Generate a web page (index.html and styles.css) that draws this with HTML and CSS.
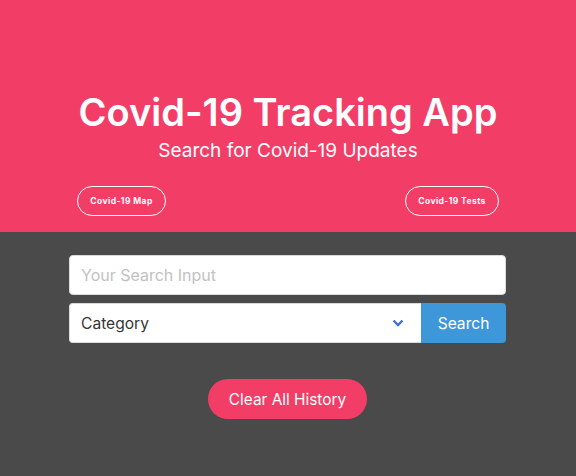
FILE: index.html
```html
<!DOCTYPE html>
<html>
<head>
<meta charset="utf-8">
<link rel="stylesheet" href="styles.css">
</head>
<body>
<section class="hero">
  <h1 class="title">Covid-19 Tracking App</h1>
  <h2 class="subtitle">Search for Covid-19 Updates</h2>
  <div class="links">
    <a class="pill">Covid-19 Map</a>
    <a class="pill">Covid-19 Tests</a>
  </div>
</section>
<main class="main">
  <div class="form">
    <input class="input" type="text" placeholder="Your Search Input">
    <div class="row">
      <div class="select">
        <span>Category</span>
        <svg class="chev" width="12" height="8" viewBox="0 0 12 8"><path d="M1.5 1.5 L6 6 L10.5 1.5" fill="none" stroke="#3e6fdc" stroke-width="2.4"/></svg>
      </div>
      <button class="search">Search</button>
    </div>
  </div>
  <button class="clear">Clear All History</button>
</main>
</body>
</html>
```
FILE: styles.css
```css
* { box-sizing: border-box; }
html, body { margin: 0; height: 100%; }
body {
  font-family: Inter, "Noto Sans", sans-serif;
  background: #4a4a4a;
  width: 576px;
  height: 476px;
  overflow: hidden;
}
.hero {
  background: #f23e67;
  height: 232px;
  padding-top: 89px;
  display: flex;
  flex-direction: column;
  align-items: center;
  color: #fff;
}
.title {
  margin: 0;
  font-size: 38px;
  font-weight: 600;
  line-height: 46px;
  letter-spacing: 0;
}
.subtitle {
  margin: 0;
  font-size: 19px;
  font-weight: 400;
  line-height: 28px;
  margin-top: 2px;
}
.links {
  width: 422px;
  display: flex;
  justify-content: space-between;
  margin-top: 21px;
}
.pill {
  display: flex;
  align-items: center;
  justify-content: center;
  height: 30px;
  padding: 0;
  white-space: nowrap;
  border: 1.3px solid #fff;
  border-radius: 15px;
  font-size: 8.5px;
  font-weight: 700;
  color: #fff;
  letter-spacing: 0.4px;
}
.pill:first-child { width: 89px; }
.pill:last-child { width: 94px; }
.main {
  display: flex;
  flex-direction: column;
  align-items: center;
  padding-top: 23px;
}
.form {
  width: 437px;
  margin-right: 1px;
  display: flex;
  flex-direction: column;
  gap: 8px;
}
.input {
  height: 40px;
  border: 1px solid #dbdbdb;
  border-radius: 4px;
  padding: 0 11px;
  font-family: inherit;
  font-size: 16px;
  color: #363636;
  background: #fff;
  outline: none;
}
.input::placeholder { color: #c2c2c2; }
.row {
  display: flex;
  height: 40px;
}
.select {
  flex: 1;
  background: #fff;
  border: 1px solid #dbdbdb;
  border-right: none;
  border-radius: 4px 0 0 4px;
  display: flex;
  align-items: center;
  justify-content: space-between;
  padding: 0 17px 0 11px;
  font-size: 15.6px;
  color: #363636;
}
.chev { display: block; }
.search {
  width: 85px;
  border: none;
  background: #3e97d9;
  color: #fff;
  font-family: inherit;
  font-size: 15.6px;
  border-radius: 0 4px 4px 0;
  padding: 0;
}
.clear {
  margin-top: 36px;
  margin-right: 1px;
  height: 40px;
  width: 159px;
  border: none;
  border-radius: 20px;
  background: #f23e67;
  color: #fff;
  font-family: inherit;
  font-size: 15.4px;
  padding: 0;
}
```
